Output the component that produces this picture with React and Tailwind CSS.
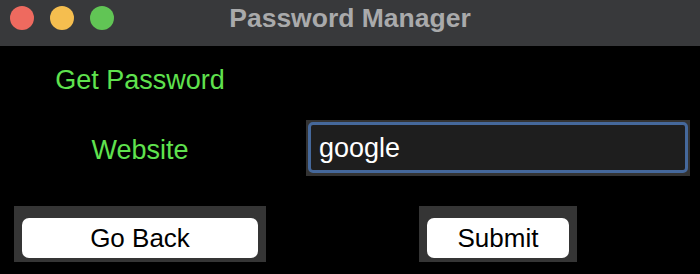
import { useState } from "react";

const font = { fontFamily: '"Liberation Sans", Arial, sans-serif' };

// Fereastra cu bara de titlu în stil macOS
const TitleBar = () => (
  <div className="relative h-[46px] bg-[#38393b]">
    <div className="flex h-[36px] items-center gap-4 pl-[10px]">
      <span className="h-6 w-6 rounded-full bg-[#ee6a5f]" />
      <span className="h-6 w-6 rounded-full bg-[#f5be4f]" />
      <span className="h-6 w-6 rounded-full bg-[#61c555]" />
    </div>
    <div className="absolute inset-x-0 top-0 flex h-[36px] items-center justify-center">
      <span className="text-[26.5px] font-bold leading-[30px] text-[#a9aaab]">
        Password Manager
      </span>
    </div>
  </div>
);

const FrameButton = ({ label, width }) => (
  <div className="h-[56px] bg-[#353535] px-2 pt-3 pb-1" style={{ width }}>
    <button className="flex h-full w-full items-center justify-center rounded-[7px] bg-white text-[26px] leading-[30px] text-black">
      {label}
    </button>
  </div>
);

export default function App() {
  const [website, setWebsite] = useState("google");

  return (
    <div className="h-[274px] w-[700px] overflow-hidden bg-black" style={font}>
      <TitleBar />

      {/* rândul 1: titlul secțiunii */}
      <div className="flex h-[68px] items-center">
        <div className="flex w-[280px] justify-center">
          <span className="text-[27px] leading-[30px] text-[#5fe24e]">Get Password</span>
        </div>
      </div>

      {/* rândul 2: website */}
      <div className="mt-[6px] flex h-[56px] items-center">
        <div className="flex w-[280px] justify-center pt-1">
          <span className="text-[27px] leading-[30px] text-[#5fe24e]">Website</span>
        </div>
        <div className="ml-[26px] mr-[10px] h-full flex-1 bg-[#333333] px-[2px] pt-[2px] pb-[3px]">
          <div className="flex h-full items-center rounded-[5px] border-[3px] border-[#45689b] bg-[#1e1e1e] pl-[8px]">
            <input
              value={website}
              onChange={(e) => setWebsite(e.target.value)}
              className="w-full bg-transparent text-[27px] leading-[30px] text-white outline-none"
              style={font}
            />
          </div>
        </div>
      </div>

      {/* rândul 3: butoane */}
      <div className="mt-[30px] flex h-[56px] items-center">
        <div className="flex w-[280px] justify-center">
          <FrameButton label="Go Back" width="252px" />
        </div>
        <div className="ml-[26px] mr-[10px] flex flex-1 justify-center">
          <FrameButton label="Submit" width="158px" />
        </div>
      </div>
    </div>
  );
}
